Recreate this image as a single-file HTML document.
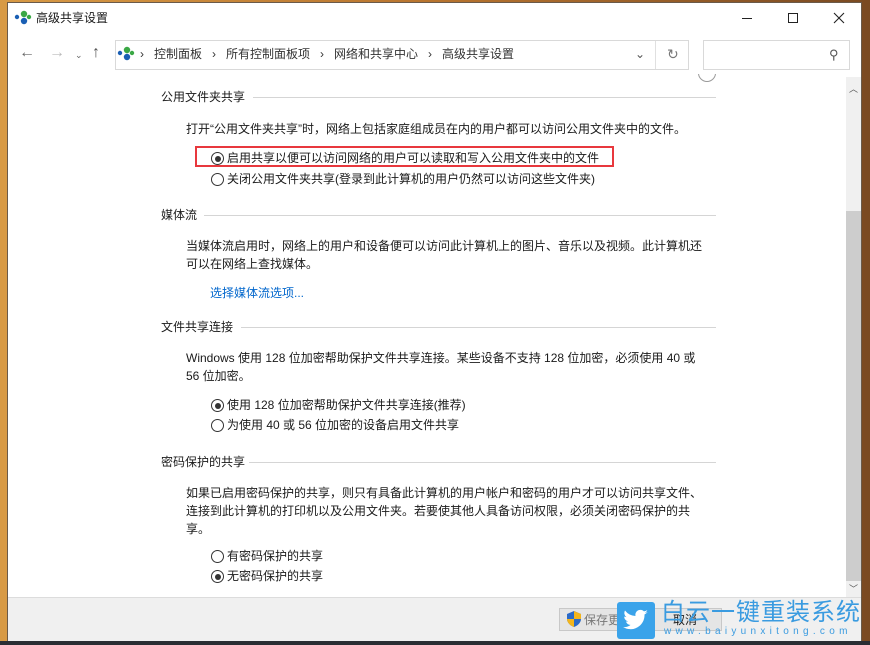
<!DOCTYPE html>
<html><head><meta charset="utf-8"><style>
*{margin:0;padding:0;box-sizing:border-box}
body{width:870px;height:645px;overflow:hidden;position:relative;background:linear-gradient(90deg,#d89a45,#b8742e 50%,#7a4a22);font-family:"Liberation Sans","Noto Sans CJK SC",sans-serif;font-size:12px;color:#1a1a1a}
.win{position:absolute;left:7px;top:2px;width:855px;height:639px;background:#fff;border:1px solid #6a5a4a}
.a{position:absolute;white-space:nowrap;line-height:18px}
.hr{position:absolute;height:1px;background:#d5d5d5}
.r{position:absolute;width:13px;height:13px;border:1px solid #333;border-radius:50%;background:#fff}
.r.on::after{content:"";position:absolute;left:2.5px;top:2.5px;width:6px;height:6px;border-radius:50%;background:#333}
</style></head><body>
<div style="position:absolute;left:0;top:641px;width:870px;height:4px;background:#2a2d33"></div>
<div class="win"></div>
<!-- title -->
<svg style="position:absolute;left:14px;top:10px" width="18" height="16"><circle cx="3" cy="7" r="2.2" fill="#1a5fb4"/><circle cx="10" cy="4" r="3.2" fill="#3aa845"/><circle cx="10" cy="11" r="3.2" fill="#1a5fb4"/><circle cx="15" cy="7" r="2.2" fill="#3aa845"/></svg>
<div class="a" style="left:36px;top:9px">高级共享设置</div>
<div style="position:absolute;left:742px;top:18px;width:10px;height:1px;background:#222"></div>
<div style="position:absolute;left:788px;top:13px;width:10px;height:10px;border:1px solid #222"></div>
<svg style="position:absolute;left:833px;top:12px" width="12" height="12"><path d="M1 1L11 11M11 1L1 11" stroke="#222" stroke-width="1.1"/></svg>
<!-- nav -->
<div class="a" style="left:19px;top:44px;font-size:16px;color:#666">←</div>
<div class="a" style="left:49px;top:44px;font-size:16px;color:#bbb">→</div>
<div class="a" style="left:75px;top:46px;font-size:9px;color:#666">⌄</div>
<div class="a" style="left:92px;top:44px;font-size:16px;color:#555">↑</div>
<div style="position:absolute;left:115px;top:40px;width:574px;height:30px;border:1px solid #d9d9d9"></div>
<div style="position:absolute;left:655px;top:41px;width:1px;height:28px;background:#e0e0e0"></div>
<svg style="position:absolute;left:117px;top:46px" width="18" height="16"><circle cx="3" cy="7" r="2.2" fill="#1a5fb4"/><circle cx="10" cy="4" r="3.2" fill="#3aa845"/><circle cx="10" cy="11" r="3.2" fill="#1a5fb4"/><circle cx="15" cy="7" r="2.2" fill="#3aa845"/></svg>
<div class="a" style="left:140px;top:45px;color:#333">›&nbsp;&nbsp; 控制面板 &nbsp;&nbsp;›&nbsp;&nbsp; 所有控制面板项 &nbsp;&nbsp;›&nbsp;&nbsp; 网络和共享中心 &nbsp;&nbsp;›&nbsp;&nbsp; 高级共享设置</div>
<div class="a" style="left:635px;top:45px;color:#555">⌄</div>
<div class="a" style="left:667px;top:45px;color:#777;font-size:14px">↻</div>
<div style="position:absolute;left:703px;top:40px;width:147px;height:30px;border:1px solid #d9d9d9"></div>
<div class="a" style="left:829px;top:46px;color:#555;font-size:13px">⚲</div>
<!-- scrollbar -->
<div style="position:absolute;left:846px;top:77px;width:15px;height:520px;background:#f0f0f0"></div>
<div style="position:absolute;left:846px;top:211px;width:15px;height:370px;background:#cdcdcd"></div>
<div class="a" style="left:849px;top:80px;font-size:9px;color:#555">︿</div>
<div class="a" style="left:849px;top:580px;font-size:9px;color:#555">﹀</div>
<div style="position:absolute;left:698px;top:64px;width:18px;height:18px;border:1px solid #999;border-radius:50%;clip-path:inset(10px 0 0 0)"></div>
<!-- content -->
<div class="a" style="left:161px;top:88px">公用文件夹共享</div><div class="hr" style="left:253px;top:97px;width:463px"></div>
<div class="a" style="left:186px;top:120px">打开“公用文件夹共享”时，网络上包括家庭组成员在内的用户都可以访问公用文件夹中的文件。</div>
<div style="position:absolute;left:195px;top:146px;width:419px;height:21px;border:2px solid #e8383d"></div>
<div class="r on" style="left:211px;top:152px"></div><div class="a" style="left:227px;top:149px">启用共享以便可以访问网络的用户可以读取和写入公用文件夹中的文件</div>
<div class="r" style="left:211px;top:173px"></div><div class="a" style="left:227px;top:170px">关闭公用文件夹共享(登录到此计算机的用户仍然可以访问这些文件夹)</div>
<div class="a" style="left:161px;top:206px">媒体流</div><div class="hr" style="left:204px;top:215px;width:512px"></div>
<div class="a" style="left:186px;top:237px">当媒体流启用时，网络上的用户和设备便可以访问此计算机上的图片、音乐以及视频。此计算机还<br>可以在网络上查找媒体。</div>
<div class="a" style="left:210px;top:284px;color:#0066cc">选择媒体流选项...</div>
<div class="a" style="left:161px;top:318px">文件共享连接</div><div class="hr" style="left:241px;top:327px;width:475px"></div>
<div class="a" style="left:186px;top:349px">Windows 使用 128 位加密帮助保护文件共享连接。某些设备不支持 128 位加密，必须使用 40 或<br>56 位加密。</div>
<div class="r on" style="left:211px;top:399px"></div><div class="a" style="left:227px;top:396px">使用 128 位加密帮助保护文件共享连接(推荐)</div>
<div class="r" style="left:211px;top:419px"></div><div class="a" style="left:227px;top:416px">为使用 40 或 56 位加密的设备启用文件共享</div>
<div class="a" style="left:161px;top:453px">密码保护的共享</div><div class="hr" style="left:249px;top:462px;width:467px"></div>
<div class="a" style="left:186px;top:484px">如果已启用密码保护的共享，则只有具备此计算机的用户帐户和密码的用户才可以访问共享文件、<br>连接到此计算机的打印机以及公用文件夹。若要使其他人具备访问权限，必须关闭密码保护的共<br>享。</div>
<div class="r" style="left:211px;top:550px"></div><div class="a" style="left:227px;top:547px">有密码保护的共享</div>
<div class="r on" style="left:211px;top:570px"></div><div class="a" style="left:227px;top:567px">无密码保护的共享</div>
<!-- footer -->
<div style="position:absolute;left:8px;top:597px;width:853px;height:44px;background:#f0f0f0;border-top:1px solid #dcdcdc"></div>
<div style="position:absolute;left:559px;top:608px;width:64px;height:23px;border:1px solid #c8c8c8;background:#e5e5e5"></div>
<svg style="position:absolute;left:567px;top:611px" width="14" height="16"><path d="M7 0L14 3V8C14 12 10 15 7 16C4 15 0 12 0 8V3Z" fill="#2a6ac8"/><path d="M7 0V8H14V3ZM0 8H7V16C4 15 0 12 0 8Z" fill="#f3b51b"/></svg>
<div class="a" style="left:584px;top:611px;color:#777">保存更</div>
<div style="position:absolute;left:654px;top:608px;width:68px;height:23px;border:1px solid #c8c8c8;background:#e5e5e5"></div>
<div class="a" style="left:673px;top:611px">取消</div>
<!-- watermark -->
<div style="position:absolute;left:617px;top:602px;width:38px;height:37px;background:#3aa3ea;border-radius:3px"></div>
<svg style="position:absolute;left:622px;top:608px" width="28" height="25"><path d="M26 4c-1 .5-2 .7-3 .8 1-.6 2-1.6 2.3-2.7-1 .6-2 1-3.3 1.3A5 5 0 0 0 13.5 8 14 14 0 0 1 3 2.5a5 5 0 0 0 1.5 6.6c-.8 0-1.6-.3-2.3-.6 0 2.4 1.7 4.4 4 4.9-.7.2-1.500.2-2.200.1.6 2 2.500 3.400 4.600 3.400A10 10 0 0 1 1 19a14 14 0 0 0 21.500-12.500C23.600 5.800 24.600 5 26 4z" fill="#fff"/></svg>
<div class="a" style="left:661px;top:598px;font-size:24px;line-height:30px;color:#3a9be0;letter-spacing:1px">白云一键重装系统</div>
<div class="a" style="left:664px;top:626px;font-size:10px;line-height:12px;color:#3a9be0;letter-spacing:4.3px">www.baiyunxitong.com</div>
</body></html>
